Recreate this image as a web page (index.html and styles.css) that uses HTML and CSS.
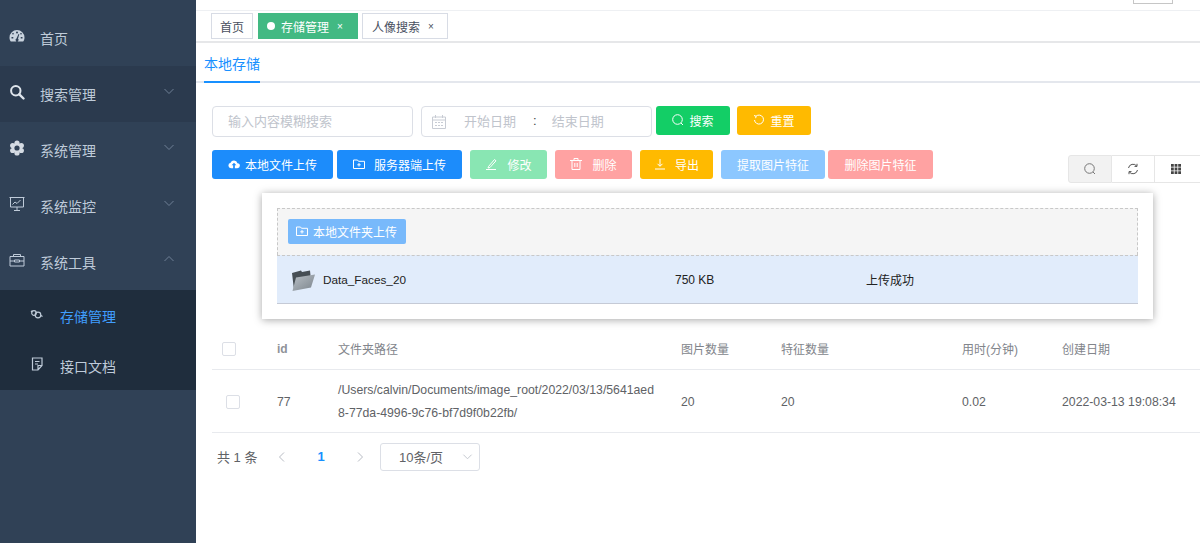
FILE: index.html
```html
<!DOCTYPE html>
<html lang="zh-CN">
<head>
  <meta charset="UTF-8">
  <meta name="viewport" content="width=device-width, initial-scale=1.0">
  <title>存储管理</title>
  <link rel="stylesheet" href="styles.css">
</head>
<body>
<div class="app">
  <aside class="sidebar">
    <div class="sidebar-gap"></div>
    <a class="menu-item">
      <svg class="menu-icon" viewBox="0 0 16 16"><path fill="#c9d3de" fill-rule="evenodd" d="M8 2a7.5 7.5 0 0 0-7.5 7.5c0 1.6.5 3 1.3 4h12.4c.8-1 1.3-2.4 1.3-4A7.5 7.5 0 0 0 8 2zM4 4.8l1 1-1 1-1-1zM8 3.5a1 1 0 1 1 0 2 1 1 0 0 1 0-2zM12 4.8l1 1-1 1-1-1zM2.5 9h1.8v1.5H2.5zM11.7 9h1.8v1.5h-1.8zM9.5 6l.8.3-1.3 4.4a1.5 1.5 0 1 1-1.5-.2z"/></svg>
      <span>首页</span>
    </a>
    <a class="menu-item menu-item-hover">
      <svg class="menu-icon" viewBox="0 0 16 16"><circle cx="6.8" cy="6.8" r="4.7" fill="none" stroke="#dfe5ec" stroke-width="2"/><path d="M10.3 10.3l4.2 4.2" stroke="#dfe5ec" stroke-width="2.4" stroke-linecap="round"/></svg>
      <span>搜索管理</span>
      <svg class="menu-arrow" viewBox="0 0 12 12"><path d="M1.5 4L6 8.5 10.5 4"/></svg>
    </a>
    <a class="menu-item">
      <svg class="menu-icon" viewBox="0 0 16 16"><g fill="#d5dbe3"><circle cx="8" cy="3" r="2.6"/><circle cx="12.3" cy="5.5" r="2.6"/><circle cx="12.3" cy="10.5" r="2.6"/><circle cx="8" cy="13" r="2.6"/><circle cx="3.7" cy="10.5" r="2.6"/><circle cx="3.7" cy="5.5" r="2.6"/><circle cx="8" cy="8" r="5"/></g><circle cx="8" cy="8" r="2.6" fill="#304156"/></svg>
      <span>系统管理</span>
      <svg class="menu-arrow" viewBox="0 0 12 12"><path d="M1.5 4L6 8.5 10.5 4"/></svg>
    </a>
    <a class="menu-item">
      <svg class="menu-icon" viewBox="0 0 16 16" fill="none" stroke="#bfcbd9"><path d="M1.5 1.5h13V11h-13zM.5 1.5h15M8 11v3M5 14.5h6M3.5 8.5L6 6l2 1.5L11.5 4"/></svg>
      <span>系统监控</span>
      <svg class="menu-arrow" viewBox="0 0 12 12"><path d="M1.5 4L6 8.5 10.5 4"/></svg>
    </a>
    <a class="menu-item">
      <svg class="menu-icon" viewBox="0 0 16 16" fill="none" stroke="#bfcbd9"><path d="M1 4.5h14V14H1zM1 9h4.5M10.5 9H15M5.5 8h5v2h-5zM4.5 4.5v-2h7v2"/></svg>
      <span>系统工具</span>
      <svg class="menu-arrow" viewBox="0 0 12 12"><path d="M1.5 8L6 3.5 10.5 8"/></svg>
    </a>
    <div class="submenu">
      <a class="sub-item active">
        <svg class="sub-icon" viewBox="0 0 14 14" fill="none" stroke="#bfcbd9" stroke-width="1.2"><circle cx="4" cy="6" r="2.3"/><circle cx="8" cy="8" r="2.8"/><path d="M1 5l1.5-1.5M12.5 9.5l-1.5-1"/></svg>
        <span>存储管理</span>
      </a>
      <a class="sub-item">
        <svg class="sub-icon" viewBox="0 0 14 14" fill="none" stroke="#bfcbd9" stroke-width="1.2"><path d="M2.5 1H12v7.5L8 13H2.5zM5 4.5h4.500M5 7h3M12 8.500H8V13"/></svg>
        <span>接口文档</span>
      </a>
    </div>
  </aside>

  <main class="main">
    <div class="navbar"><span class="navbar-btn"></span></div>

    <div class="tags">
      <span class="tag">首页</span>
      <span class="tag tag-active"><i class="tag-dot"></i>存储管理<em class="tag-x">×</em></span>
      <span class="tag tag-last">人像搜索<em class="tag-x">×</em></span>
    </div>

    <div class="tabs"><span class="tab">本地存储</span></div>

    <div class="content">
      <div class="filter-row">
        <div class="field field-search">输入内容模糊搜索</div>
        <div class="field field-date">
          <svg class="date-icon" viewBox="0 0 14 14" fill="none" stroke="#c8ccd4"><path d="M.5 2h13v11.5H.5zM.5 5h13M3.5 0v3M10.5 0v3M3 7.5h2M6 7.5h2M9 7.5h2M3 10.5h2M6 10.5h2M9 10.5h2"/></svg>
          <span class="date-text">开始日期</span>
          <span class="date-sep">:</span>
          <span class="date-text">结束日期</span>
        </div>
        <button class="btn btn-search">
          <svg class="btn-icon" viewBox="0 0 12 12" fill="none" stroke="#fff"><circle cx="5.5" cy="5.5" r="4.8"/><path d="M9 9l2 2"/></svg>搜索
        </button>
        <button class="btn btn-reset">
          <svg class="btn-icon" viewBox="0 0 12 12" fill="none" stroke="#fff"><path d="M3 2.2A4.5 4.5 0 1 1 1.5 6M1 1.5l2 .7-.3 2"/></svg>重置
        </button>
      </div>

      <div class="action-row">
        <button class="btn btn-blue btn-upload">
          <svg class="btn-icon" viewBox="0 0 14 12"><path fill="#fff" fill-rule="evenodd" d="M3.5 11A3.3 3.3 0 0 1 3 4.500a4.200 4.200 0 0 1 8 .5 3 3 0 0 1-.3 6H8V7.500h1.800L7 4.500l-2.800 3H6V11z"/></svg>本地文件上传
        </button>
        <button class="btn btn-blue btn-server">
          <svg class="btn-icon btn-icon-mid" viewBox="0 0 12 12" fill="none" stroke="#fff"><path d="M.5 2h4l1 1.3h6v7.2H.5zM6 5v3.5M4.3 6.8h3.4"/></svg>服务器端上传
        </button>
        <button class="btn btn-green-light btn-short">
          <svg class="btn-icon btn-icon-wide" viewBox="0 0 12 12" fill="none" stroke="#fff"><path d="M3.5 8.5l6-7 1.500 1.300-6 6.700-2 .5zM1 11.500h10"/></svg>修改
        </button>
        <button class="btn btn-red-light btn-short">
          <svg class="btn-icon btn-icon-wide" viewBox="0 0 12 12" fill="none" stroke="#fff"><path d="M0 2.5h12M4 2.5V.5h4v2M2 2.5v9h8v-9M4.8 5v4M7.2 5v4"/></svg>删除
        </button>
        <button class="btn btn-orange btn-export">
          <svg class="btn-icon btn-icon-mid" viewBox="0 0 12 12" fill="none" stroke="#fff"><path d="M1 11h10M6 1v7M3.5 5.8L6 8.3l2.5-2.5"/></svg>导出
        </button>
        <button class="btn btn-blue-light btn-feature">提取图片特征</button>
        <button class="btn btn-red-light btn-feature btn-tight">删除图片特征</button>
      </div>

      <div class="toolbar">
        <span class="tool tool-on">
          <svg class="tool-icon" viewBox="0 0 12 12" fill="none" stroke="#777"><circle cx="5.5" cy="5.5" r="4.8"/><path d="M9 9l2 2"/></svg>
        </span>
        <span class="tool">
          <svg class="tool-icon" viewBox="0 0 12 12" fill="none" stroke="#555"><path d="M1.5 5A4.6 4.6 0 0 1 9.8 3.2M10.5 7A4.6 4.6 0 0 1 2.2 8.8M10 .8v2.6H7.5M2 11.2V8.6h2.5"/></svg>
        </span>
        <span class="tool tool-last">
          <svg class="tool-icon" viewBox="0 0 12 12" fill="#444"><path d="M1 1h2.8v2.8H1zM4.6 1h2.8v2.8H4.6zM8.2 1H11v2.8H8.2zM1 4.6h2.8v2.8H1zM4.6 4.6h2.8v2.8H4.6zM8.2 4.6H11v2.8H8.2zM1 8.2h2.8V11H1zM4.6 8.2h2.8V11H4.6zM8.2 8.2H11V11H8.2z"/></svg>
        </span>
      </div>

      <div class="grid grid-head">
        <div><span class="check"></span></div>
        <div class="col-id">id</div>
        <div>文件夹路径</div>
        <div>图片数量</div>
        <div>特征数量</div>
        <div>用时(分钟)</div>
        <div>创建日期</div>
      </div>
      <div class="grid grid-row">
        <div><span class="check check-row"></span></div>
        <div>77</div>
        <div class="path">/Users/calvin/Documents/image_root/2022/03/13/5641aed8-77da-4996-9c76-bf7d9f0b22fb/</div>
        <div>20</div>
        <div>20</div>
        <div>0.02</div>
        <div>2022-03-13 19:08:34</div>
      </div>

      <div class="pager">
        <span class="pager-total">共 1 条</span>
        <svg class="pager-arrow" viewBox="0 0 8 12"><path d="M6 1.5L1.5 6 6 10.5"/></svg>
        <span class="pager-num">1</span>
        <svg class="pager-arrow" viewBox="0 0 8 12"><path d="M2 1.5L6.5 6 2 10.5"/></svg>
        <span class="pager-size">10条/页<svg class="pager-caret" viewBox="0 0 12 12"><path d="M1.5 4L6 8.5 10.5 4"/></svg></span>
      </div>
    </div>

    <div class="upload-pop">
      <div class="drop-zone">
        <button class="btn-folder">
          <svg class="btn-icon" viewBox="0 0 12 12" fill="none" stroke="#fff"><path d="M.5 2h4l1 1.3h6v7.2H.5zM6 5v3.5M4.3 6.8h3.4"/></svg>本地文件夹上传
        </button>
      </div>
      <div class="file-row">
        <svg class="file-icon" viewBox="0 0 24 24">
          <defs>
            <linearGradient id="folderFront" x1="0" y1="0" x2="1" y2="1"><stop offset="0" stop-color="#b9c0c6"/><stop offset="1" stop-color="#7b848c"/></linearGradient>
          </defs>
          <path fill="#464e54" d="M1 5l9-2.5 1 1.5 8-1.5.5 5L3 22z"/>
          <path fill="url(#folderFront)" d="M5 9.5l19-3-4 13L1.500 23z"/>
        </svg>
        <span class="file-name">Data_Faces_20</span>
        <span class="file-size">750 KB</span>
        <span class="file-state">上传成功</span>
      </div>
    </div>
  </main>
</div>
</body>
</html>
```

FILE: styles.css
```css
* {
  box-sizing: border-box;
}
html, body {
  height: 100%;
}
body {
  margin: 0;
  font-family: "Liberation Sans", "Noto Sans CJK SC", Arial, sans-serif;
  background-color: #fff;
  overflow: hidden;
}
svg {
  display: block;
  flex: none;
}
.app {
  display: flex;
  height: 543px;
  overflow: hidden;
}

/* sidebar */
.sidebar {
  width: 196px;
  flex: none;
  background-color: #304156;
  color: #bfcbd9;
  font-size: 14px;
}
.sidebar-gap {
  height: 10px;
}
.menu-item {
  display: flex;
  align-items: center;
  height: 56px;
  padding: 0 20px 0 9px;
}
.menu-item-hover {
  background-color: #2b3a4e;
}
.menu-icon {
  width: 16px;
  height: 16px;
  margin-right: 15px;
  position: relative;
  top: -2px;
}
.menu-arrow {
  width: 12px;
  height: 12px;
  margin-left: auto;
  margin-right: 1px;
  position: relative;
  top: -3px;
  fill: none;
  stroke: #6f8096;
}
.submenu {
  background-color: #1f2d3d;
}
.sub-item {
  display: flex;
  align-items: center;
  height: 50px;
  padding: 2px 0 0 30px;
}
.sub-item.active {
  color: #409eff;
}
.sub-icon {
  width: 14px;
  height: 14px;
  margin-right: 16px;
  position: relative;
  top: -2px;
}

/* main */
.main {
  flex: 1;
  min-width: 0;
  position: relative;
}
.navbar {
  height: 11px;
  border-bottom: 1px solid #eef0f3;
  padding-left: 937px;
}
.navbar-btn {
  display: block;
  width: 40px;
  height: 4px;
  border: 1px solid #c6c6c6;
  border-top: none;
}
.tags {
  display: flex;
  gap: 5px;
  height: 32px;
  padding: 2px 0 0 15px;
  border-bottom: 2px solid #e6e7e9;
}
.tag {
  display: flex;
  align-items: center;
  height: 26px;
  padding: 0 8px;
  border: 1px solid #d8dce5;
  font-size: 12px;
  color: #495060;
  background-color: #fff;
}
.tag-active {
  background-color: #42b983;
  border-color: #42b983;
  color: #fff;
}
.tag-last {
  margin-left: -1px;
  padding: 0 7px 0 9px;
}
.tag-dot {
  width: 8px;
  height: 8px;
  border-radius: 50%;
  background-color: #fff;
  margin-right: 6px;
}
.tag-x {
  font-style: normal;
  font-size: 10px;
  margin-left: 8px;
  margin-right: 6px;
}
.tabs {
  height: 40px;
  padding-left: 8px;
  border-bottom: 2px solid #e4e7ed;
}
.tab {
  display: block;
  width: 56px;
  height: 40px;
  line-height: 42px;
  font-size: 14px;
  color: #1890ff;
  border-bottom: 2px solid #1890ff;
}
.content {
  padding: 23px 0 0 16px;
}
.filter-row {
  display: flex;
  align-items: flex-start;
  height: 31px;
}
.field {
  height: 31px;
  padding-bottom: 2px;
  border: 1px solid #dcdfe6;
  border-radius: 4px;
  font-size: 13px;
  color: #c0c4cc;
  display: flex;
  align-items: center;
}
.field-search {
  width: 201px;
  padding-left: 15px;
  margin-right: 8px;
}
.field-date {
  width: 231px;
  padding-left: 10px;
  margin-right: 4px;
}
.date-icon {
  width: 14px;
  height: 14px;
  margin: 2px 18px 0 0;
}
.date-sep {
  color: #444;
  margin: 0 15px 0 17px;
}
.btn {
  display: flex;
  align-items: center;
  justify-content: center;
  height: 29px;
  padding: 0 0 1px;
  border: none;
  border-radius: 3px;
  font-family: inherit;
  font-size: 12px;
  color: #fff;
}
.btn-icon {
  width: 12px;
  height: 12px;
  margin-right: 5px;
}
.btn-icon-mid {
  margin-right: 9px;
}
.btn-icon-wide {
  margin-right: 10px;
}
.btn-search {
  width: 74px;
  background-color: #13ce66;
  margin-right: 7px;
}
.btn-reset {
  width: 74px;
  background-color: #ffba00;
}
.action-row {
  display: flex;
  margin-top: 13px;
}
.btn-blue {
  background-color: #1c8cfb;
}
.btn-upload {
  width: 121px;
  margin-right: 4px;
}
.btn-server {
  width: 125px;
  margin-right: 8px;
}
.btn-short {
  width: 77px;
  margin-right: 8px;
}
.btn-green-light {
  background-color: #89e6b3;
}
.btn-red-light {
  background-color: #ffa2a2;
}
.btn-orange {
  background-color: #ffba00;
}
.btn-export {
  width: 73px;
  margin-right: 8px;
}
.btn-blue-light {
  background-color: #8cc7ff;
}
.btn-feature {
  width: 104px;
  margin-right: 3px;
}
.btn-tight {
  width: 105px;
}
.toolbar {
  display: flex;
  justify-content: flex-start;
  height: 28px;
  margin: -24px 0 0 856px;
}
.tool {
  flex: none;
  width: 43px;
  display: flex;
  align-items: center;
  justify-content: center;
  border: 1px solid #e6e6e6;
  border-left: none;
}
.tool:first-child {
  border-left: 1px solid #e6e6e6;
  border-radius: 3px 0 0 3px;
}
.tool-on {
  width: 44px;
  background-color: #f2f2f2;
}
.tool-last {
  width: 50px;
  border-right: none;
  padding-right: 8px;
}
.tool-icon {
  width: 12px;
  height: 12px;
}

/* table */
.grid {
  display: grid;
  grid-template-columns: 65px 61px 343px 100px 181px 100px 1fr;
  align-items: center;
  font-size: 12.25px;
  color: #606266;
  border-bottom: 1px solid #e8eaee;
}
.grid-head {
  margin-top: 147px;
  height: 40px;
  padding-bottom: 2px;
  font-size: 12px;
  color: #82858b;
}
.grid-row {
  height: 63px;
  padding-top: 1px;
}
.col-id {
  font-weight: 700;
  color: #909399;
}
.check {
  display: block;
  width: 14px;
  height: 14px;
  border: 1px solid #dcdfe6;
  border-radius: 2px;
  margin-left: 10px;
}
.check-row {
  margin-left: 14px;
}
.path {
  width: 320px;
  line-height: 23px;
  word-break: break-all;
}
.pager {
  display: flex;
  align-items: center;
  height: 29px;
  margin-top: 9px;
  padding-left: 5px;
  font-size: 13px;
  color: #606266;
}
.pager-total {
  width: 61px;
}
.pager-arrow {
  width: 8px;
  height: 12px;
  fill: none;
  stroke: #b8bcc4;
}
.pager-num {
  width: 70px;
  text-align: center;
  font-weight: 700;
  color: #1890ff;
}
.pager-size {
  display: flex;
  align-items: center;
  justify-content: space-between;
  width: 100px;
  height: 28px;
  margin-left: 16px;
  padding: 0 6px 0 18px;
  border: 1px solid #dcdfe6;
  border-radius: 3px;
}
.pager-caret {
  width: 11px;
  height: 11px;
  fill: none;
  stroke: #c0c4cc;
}

/* upload popup */
.upload-pop {
  position: absolute;
  left: 66px;
  top: 193px;
  width: 891px;
  height: 126px;
  padding: 15px 15px 0;
  background-color: #fff;
  box-shadow: 0 1px 8px rgba(0, 0, 0, 0.35);
}
.drop-zone {
  height: 47px;
  padding: 10px 10px 0;
  background-color: #f5f5f5;
  border: 1px dashed #c8c8c8;
  border-bottom: none;
}
.btn-folder {
  display: flex;
  align-items: center;
  height: 25px;
  width: 118px;
  padding: 0 0 1px 8px;
  border: none;
  border-radius: 2px;
  background-color: #78b9fb;
  color: #fff;
  font-family: inherit;
  font-size: 12px;
}
.file-row {
  display: flex;
  align-items: center;
  height: 49px;
  padding-left: 14px;
  background-color: #e1ecfb;
  border-top: 1px dashed #c8c8c8;
  border-bottom: 1px solid #c5cad6;
  font-size: 12px;
  color: #222;
}
.file-icon {
  width: 24px;
  height: 24px;
  margin-right: 8px;
}
.file-name {
  width: 352px;
  font-size: 11.75px;
}
.file-size {
  width: 191px;
}
```
